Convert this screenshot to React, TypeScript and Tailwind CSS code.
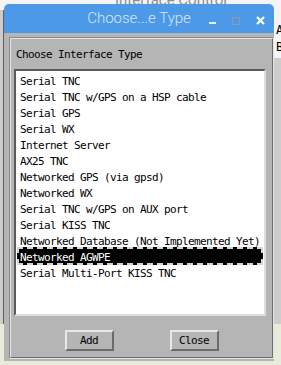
const items = [
  "Serial TNC",
  "Serial TNC w/GPS on a HSP cable",
  "Serial GPS",
  "Serial WX",
  "Internet Server",
  "AX25 TNC",
  "Networked GPS (via gpsd)",
  "Networked WX",
  "Serial TNC w/GPS on AUX port",
  "Serial KISS TNC",
  "Networked Database (Not Implemented Yet)",
  "Networked AGWPE",
  "Serial Multi-Port KISS TNC",
];

const selected = 11;

function Button({ label }: { label: string }) {
  return (
    <button className="h-[21px] w-[49px] border-2 border-t-[#e8e8e8] border-l-[#e8e8e8] border-b-[#6b6b6b] border-r-[#6b6b6b] bg-[#b5b5b5] text-[11px] leading-[16px] tracking-[-0.62px] text-black">
      {label}
    </button>
  );
}

export default function App() {
  return (
    <div className="relative h-[365px] w-[281px] overflow-hidden bg-[#e7ebda] font-['DejaVu_Sans_Mono',monospace]">
      {/* window behind the dialog */}
      <div className="absolute left-0 top-0 h-[324px] w-[281px] bg-[#cdcdcd]">
        <div className="h-[10px] bg-[#f4f4f4]" />
        <div className="absolute left-[115px] top-[-7px] font-['Roboto',sans-serif] text-[15px] leading-[15px] text-[#8f8f8f]">
          Interface Control
        </div>
        <div className="absolute left-[3px] top-[10px] h-[314px] w-px bg-[#5f5f5f]" />
        <div className="absolute left-[272px] top-[10px] flex h-[48px] w-[9px] flex-col bg-[#f4f4f4] pl-[4px] pt-[12px] text-[12px] leading-[17px] text-black">
          <span>A</span>
          <span>B</span>
        </div>
      </div>

      {/* dialog */}
      <div className="absolute left-[4px] top-[4px] flex h-[357px] w-[270px] flex-col">
        <div className="relative flex h-[29px] items-center justify-center rounded-t-[5px] bg-[#4c9ae7]">
          <span className="font-['Roboto',sans-serif] text-[15px] font-light text-[#d9e7f8]">Choose...e Type</span>
          <div className="absolute left-[205px] top-[18px] h-[2px] w-[7px] bg-[#eef4fb]" />
          <div className="absolute left-[228px] top-[13px] h-[8px] w-[8px] border-[1.5px] border-[#8e9aa8]" />
          <svg className="absolute left-[252px] top-[12px]" width="9" height="9" viewBox="0 0 9 9">
            <path d="M1 1 L8 8 M8 1 L1 8" stroke="#ffffff" strokeWidth="2.2" />
          </svg>
        </div>

        <div className="flex flex-1 flex-col bg-[#b5b5b5] pb-[2px] pl-[5px] pt-[4px]">
          <div className="flex flex-1 flex-col border border-t-[#8a8a8a] border-l-[#8a8a8a] border-b-[#e4e4e4] border-r-[#e4e4e4]">
            <div className="flex flex-1 flex-col border border-t-[#e4e4e4] border-l-[#e4e4e4] border-b-[#6e6e6e] border-r-[#6e6e6e] text-[11px] leading-[16px] tracking-[-0.62px] text-black">
              <div className="mt-[8px] h-[16px] pl-[5px]">Choose Interface Type</div>

              <div className="ml-[3px] mt-[6px] h-[247px] w-[252px] border-2 border-t-[#5a5a5a] border-l-[#5a5a5a] border-b-[#dedede] border-r-[#dedede] bg-white pt-[3px]">
                {items.map((item, i) =>
                  i === selected ? (
                    <div
                      key={item}
                      className="mx-px -mt-[3px] mb-px h-[18px] whitespace-nowrap border-2 border-dashed border-[#d4d4d4] bg-black pl-px pt-px text-white"
                    >
                      {item}
                    </div>
                  ) : (
                    <div key={item} className="h-[16px] whitespace-nowrap pl-[4px]">
                      {item}
                    </div>
                  )
                )}
              </div>

              <div className="mt-[14px] flex justify-center gap-[56px]">
                <Button label="Add" />
                <Button label="Close" />
              </div>
            </div>
          </div>
        </div>
      </div>
    </div>
  );
}
